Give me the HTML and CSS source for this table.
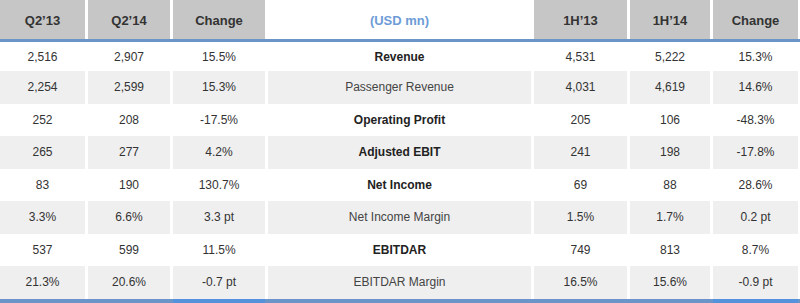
FILE: index.html
```html
<!DOCTYPE html>
<html lang="en">
<head>
  <meta charset="UTF-8">
  <title>Quarterly Results</title>
  <link rel="stylesheet" href="styles.css">
</head>
<body>
  <div class="results">
    <div class="row head">
      <div class="cell">Q2’13</div>
      <div class="cell">Q2’14</div>
      <div class="cell">Change</div>
      <div class="cell unit">(USD mn)</div>
      <div class="cell">1H’13</div>
      <div class="cell">1H’14</div>
      <div class="cell">Change</div>
    </div>

    <div class="body">
      <div class="row">
        <div class="cell">2,516</div><div class="cell">2,907</div><div class="cell chg">15.5%</div>
        <div class="cell label strong">Revenue</div>
        <div class="cell">4,531</div><div class="cell">5,222</div><div class="cell chg">15.3%</div>
      </div>
      <div class="row alt">
        <div class="cell">2,254</div><div class="cell">2,599</div><div class="cell chg">15.3%</div>
        <div class="cell label">Passenger Revenue</div>
        <div class="cell">4,031</div><div class="cell">4,619</div><div class="cell chg">14.6%</div>
      </div>
      <div class="row">
        <div class="cell">252</div><div class="cell">208</div><div class="cell chg">-17.5%</div>
        <div class="cell label strong">Operating Profit</div>
        <div class="cell">205</div><div class="cell">106</div><div class="cell chg">-48.3%</div>
      </div>
      <div class="row alt">
        <div class="cell">265</div><div class="cell">277</div><div class="cell chg">4.2%</div>
        <div class="cell label strong">Adjusted EBIT</div>
        <div class="cell">241</div><div class="cell">198</div><div class="cell chg">-17.8%</div>
      </div>
      <div class="row">
        <div class="cell">83</div><div class="cell">190</div><div class="cell chg">130.7%</div>
        <div class="cell label strong">Net Income</div>
        <div class="cell">69</div><div class="cell">88</div><div class="cell chg">28.6%</div>
      </div>
      <div class="row alt">
        <div class="cell">3.3%</div><div class="cell">6.6%</div><div class="cell chg">3.3 pt</div>
        <div class="cell label">Net Income Margin</div>
        <div class="cell">1.5%</div><div class="cell">1.7%</div><div class="cell chg">0.2 pt</div>
      </div>
      <div class="row">
        <div class="cell">537</div><div class="cell">599</div><div class="cell chg">11.5%</div>
        <div class="cell label strong">EBITDAR</div>
        <div class="cell">749</div><div class="cell">813</div><div class="cell chg">8.7%</div>
      </div>
      <div class="row alt">
        <div class="cell">21.3%</div><div class="cell">20.6%</div><div class="cell chg">-0.7 pt</div>
        <div class="cell label">EBITDAR Margin</div>
        <div class="cell">16.5%</div><div class="cell">15.6%</div><div class="cell chg">-0.9 pt</div>
      </div>
    </div>
  </div>
</body>
</html>
```

FILE: styles.css
```css
:root {
  --head: #c6c6c6;
  --alt: #efefef;
  --line: #6b95c8;
  --line-bright: #5592dc;
  --accent: #6d9bd6;
  --text: #333;
}

* {
  box-sizing: border-box;
  margin: 0;
  padding: 0;
}

body {
  font-family: "Liberation Sans", Arial, sans-serif;
  background: #fff;
  color: var(--text);
  width: 800px;
  height: 303px;
  overflow: hidden;
}

.results {
  width: 800px;
}

.row {
  display: grid;
  grid-template-columns: 85px 82px 92px 263px 93px 80px 85px;
  column-gap: 3px;
  height: 32.5px;
}

.cell {
  display: flex;
  align-items: center;
  justify-content: center;
  font-size: 12px;
}

.head {
  height: 42px;
  border-bottom: 3px solid var(--line);
}

.head .cell {
  background: var(--head);
  font-size: 13px;
  font-weight: bold;
  color: #333;
  padding-top: 1px;
}

.head .unit {
  background: none;
  color: var(--accent);
}

.body {
  border-bottom: 5px solid var(--line);
}

.body .row:first-child {
  height: 29px;
}

/* brighter rule under the change columns */
.body .row:last-child .chg {
  box-shadow: 0 5px 0 var(--line-bright);
}

.alt .cell {
  background: var(--alt);
}

.label {
  color: #444;
}

.strong {
  font-weight: bold;
  color: #222;
}
```
